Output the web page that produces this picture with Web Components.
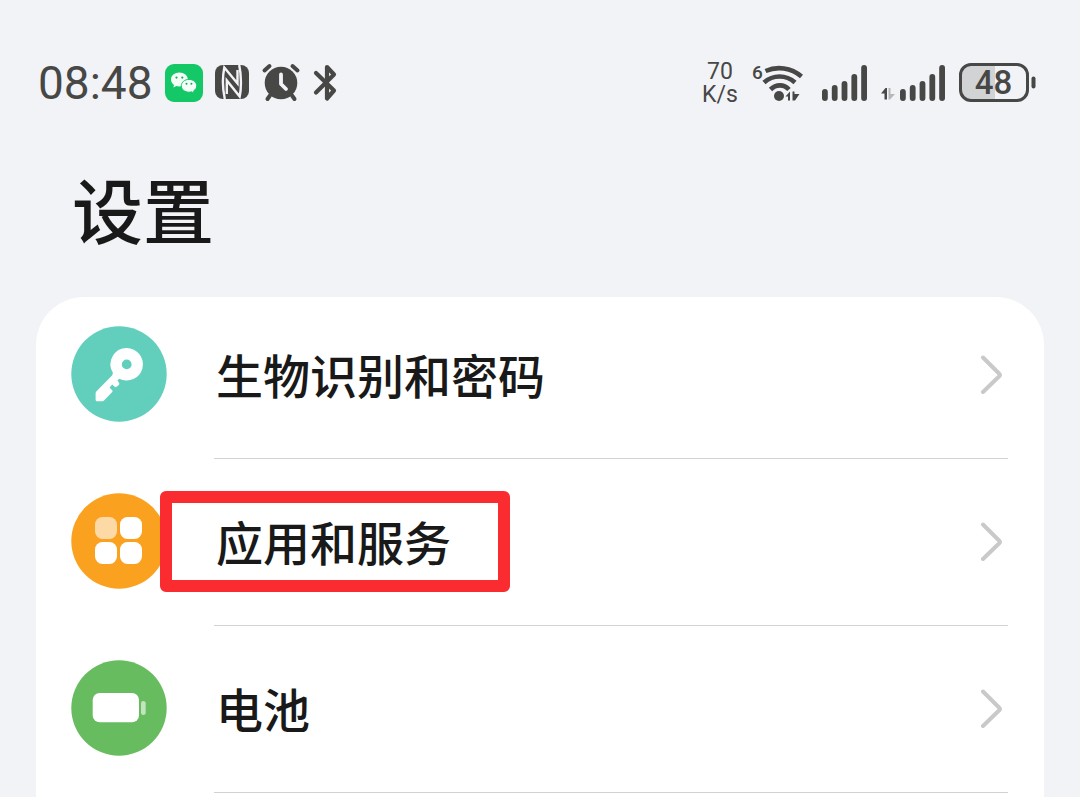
<!DOCTYPE html>
<html lang="zh-CN">
<head>
<meta charset="utf-8">
<meta name="viewport" content="width=device-width, initial-scale=1">
<title>设置</title>
<style>
  body { margin: 0; background: #f2f3f6; color: #191919; font-family: "Noto Sans CJK SC", sans-serif; }
</style>
</head>
<body>
<settings-page>
  <status-bar slot="status" time="08:48" rate="70" unit="K/s" battery="48"></status-bar>
  <span slot="title">设置</span>
  <settings-row icon="key" href="#security">生物识别和密码</settings-row>
  <settings-row icon="apps" href="#apps" marked>应用和服务</settings-row>
  <settings-row icon="battery" href="#battery">电池</settings-row>
</settings-page>

<script>
const bars = (x) => [89, 85, 81, 74, 65]
  .map((top, i) => `<rect x="${x + i * 9.8}" y="${top - 63}" width="5.8" height="${101 - top}" rx="2.9"/>`).join('');

class StatusBar extends HTMLElement {
  connectedCallback() {
    const a = (n) => this.getAttribute(n);
    this.attachShadow({ mode: 'open' }).innerHTML = `
      <style>
        :host { display: flex; justify-content: space-between; align-items: center; height: 46px; padding: 60px 44px 0 38px; color: #474746; font-family: Roboto, sans-serif; }
        .group { display: flex; align-items: center; }
        .left { gap: 12px; }
        .right { gap: 13px; }
        svg { display: block; flex: none; fill: currentColor; }
        .line { fill: none; stroke: currentColor; stroke-linecap: round; stroke-linejoin: round; }
        time { width: 115px; font-size: 46px; line-height: 46px; }
        .net { width: 38px; text-align: center; font-size: 23px; line-height: 23px; }
        text { font-family: Roboto, sans-serif; font-weight: 500; }
      </style>
      <div class="group left">
        <time>${a('time')}</time>
        <svg width="38" height="38" viewBox="0 0 38 38" aria-label="WeChat">
          <rect width="38" height="38" rx="9" fill="#14c767"/>
          <path d="M14.4 8.6c-4.7 0-8.4 3.1-8.4 7 0 2.2 1.2 4.2 3.1 5.5l-.8 2.5 3-1.500c1 .3 2 .5 3.100.5 4.700 0 8.400-3.100 8.400-7s-3.700-7-8.400-7z" fill="#f4fff8"/>
          <path d="M24 15.400c-4.300 0-7.700 2.800-7.700 6.400s3.400 6.400 7.700 6.400c.9 0 1.800-.1 2.600-.4l2.700 1.400-.7-2.300c1.900-1.200 3.100-3 3.100-5.100 0-3.600-3.400-6.400-7.700-6.400z" fill="#f4fff8" stroke="#14c767" stroke-width="1"/>
          <g fill="#14a85a"><circle cx="11.500" cy="13.600" r="1.100"/><circle cx="17.300" cy="13.600" r="1.100"/><circle cx="21.500" cy="19.800" r="1"/><circle cx="26.400" cy="19.800" r="1"/></g>
        </svg>
        <svg width="34" height="36" viewBox="0 0 34 36" aria-label="NFC">
          <rect width="34" height="34" rx="8"/>
          <g fill="none" stroke="#f2f3f6" stroke-width="2.400">
            <path d="M9.800 34C7.600 24 7.600 11 9.300 2.500L22.500 18.500V5"/>
            <path d="M24.200 0C26.400 10 26.400 24 24.700 31.500L11.800 15.500V29"/>
          </g>
        </svg>
        <svg width="40" height="40" viewBox="0 0 40 40" aria-label="闹钟">
          <circle cx="20" cy="20" r="16.300"/>
          <g class="line" stroke-width="4"><path d="M3.500 7.500L8.500 3M31.500 3l5 4.500M9 32.500L6.500 36M31 32.500l2.500 3.500"/></g>
          <path d="M20 11.500v9.500l5 5" fill="none" stroke="#f2f3f6" stroke-width="3.800" stroke-linecap="round" stroke-linejoin="round"/>
        </svg>
        <svg width="26" height="40" viewBox="0 0 26 40" aria-label="蓝牙">
          <path class="line" stroke-width="4.200" d="M3 10L21 27.500 14 35.500V4L21 11.500 3 29.500"/>
        </svg>
      </div>
      <div class="group right">
        <div class="net">${a('rate')}<br>${a('unit')}</div>
        <svg width="53" height="42" viewBox="0 0 53 42" aria-label="Wi-Fi 6">
          <text x="0" y="17" font-size="19">6</text>
          <g class="line" stroke-width="4.600" style="stroke-linecap:butt">
            <path d="M13.500 9C25 4 39 5.500 49.500 14.500"/>
            <path d="M12 20.500C21 12.500 34 12.500 43 20.500"/>
            <path d="M18.500 27.500C24 22 32 22 37 27.500"/>
          </g>
          <circle cx="27" cy="34" r="5"/>
          <path d="M33.500 34.500l4.500-5v9h-2v-4zM40.500 29.500h2v2.500h5l-4.500 6.500h-2.500z"/>
        </svg>
        <svg width="49" height="40" viewBox="0 0 49 40" aria-label="信号">${bars(4)}</svg>
        <svg width="66" height="40" viewBox="0 0 66 40" aria-label="信号">
          <path d="M1 30.500L5.500 25H7v11.500H4.500v-6z"/>
          <path d="M8.500 25h2v6H15l-5 5.500H8.500z" opacity=".35"/>
          ${bars(20)}
        </svg>
        <svg width="77" height="40" viewBox="0 0 77 40" aria-label="电量">
          <path d="M36 2H12A10 10 0 0 0 2 12V28A10 10 0 0 0 12 38H36z" fill="#d2d3d5"/>
          <rect class="line" x="1.500" y="1.500" width="67" height="36" rx="10.500" stroke-width="3"/>
          <rect x="72.500" y="13.500" width="4" height="12" rx="2"/>
          <text x="34.500" y="31" font-size="33" text-anchor="middle">${a('battery')}</text>
        </svg>
      </div>`;
  }
}

class SettingsPage extends HTMLElement {
  connectedCallback() {
    this.attachShadow({ mode: 'open' }).innerHTML = `
      <style>
        :host { display: flex; flex-direction: column; min-height: 100vh; }
        h1 { margin: 59px 72px 48px; font-size: 71px; line-height: 84px; font-weight: 500; }
        nav { flex: 1; display: flex; flex-direction: column; gap: 34px; margin: 0 36px; padding-top: 29px; background: #fff; border-radius: 48px 48px 0 0; }
      </style>
      <slot name="status"></slot>
      <h1><slot name="title"></slot></h1>
      <nav><slot></slot></nav>`;
  }
}

const ICONS = {
  key: ['#62cfbd', `<path fill-rule="evenodd" d="M55.700 22a16.300 16.300 0 1 1-7.500 30.800L46.500 54.500l1.500 2.200c.6 1 .3 2-.5 2.600l-2 1.500c-.8.6-1.500.5-2.200-.2l-2-2-2.800 3 2.500 2.400c.7.700.7 1.500 0 2.200L33 74.500c-.6.600-1 .8-1.800.8H26.500c-1.200 0-1.900-.7-1.900-1.900v-6c0-.9.300-1.500.9-2.100L41.300 49.300l.6-2.500A16.300 16.300 0 0 1 55.700 22zm0 11.500a4.900 4.900 0 1 0 0 9.800 4.900 4.900 0 0 0 0-9.800z"/>`],
  apps: ['#faa21f', `<rect x="24" y="24" width="22" height="22" rx="7.500" opacity=".6"/><rect x="49" y="24" width="22" height="22" rx="7.500"/><rect x="24" y="49" width="22" height="22" rx="7.500"/><rect x="49" y="49" width="22" height="22" rx="7.500"/>`],
  battery: ['#67bc5f', `<rect x="21.700" y="33" width="46.300" height="29.300" rx="7"/><rect x="70" y="41" width="4.700" height="14" rx="2.300" opacity=".6"/>`],
};

class SettingsRow extends HTMLElement {
  connectedCallback() {
    const [color, art] = ICONS[this.getAttribute('icon')];
    this.attachShadow({ mode: 'open' }).innerHTML = `
      <style>
        :host { display: block; }
        a { display: grid; grid-template-columns: 96px 1fr; column-gap: 47px; padding: 0 36px 0 35px; color: inherit; text-decoration: none; }
        .icon { width: 96px; height: 96px; fill: #fff; }
        .body { display: flex; align-items: center; justify-content: space-between; height: 96px; padding: 0 4px 36px 2px; border-bottom: 1px solid #d2d2d2; }
        .label { position: relative; font-size: 47px; line-height: 96px; font-weight: 500; }
        :host([marked]) .label::after { content: ""; position: absolute; inset: -2px -59px -3px -56px; border: 12px solid #fa2c30; border-radius: 6px; box-sizing: border-box; }
        .chevron { width: 24px; height: 40px; fill: none; stroke: #c9c9c9; stroke-width: 4; stroke-linecap: round; stroke-linejoin: round; }
      </style>
      <a href="${this.getAttribute('href')}">
        <svg class="icon" viewBox="0 0 96 96" aria-hidden="true"><circle cx="48" cy="48" r="47.700" fill="${color}"/>${art}</svg>
        <span class="body">
          <span class="label"><slot></slot></span>
          <svg class="chevron" viewBox="0 0 24 40" aria-hidden="true"><path d="M3 3.500L19.500 20a1.500 1.500 0 0 1 0 2L3 38"/></svg>
        </span>
      </a>`;
  }
}

customElements.define('status-bar', StatusBar);
customElements.define('settings-page', SettingsPage);
customElements.define('settings-row', SettingsRow);
</script>
</body>
</html>
